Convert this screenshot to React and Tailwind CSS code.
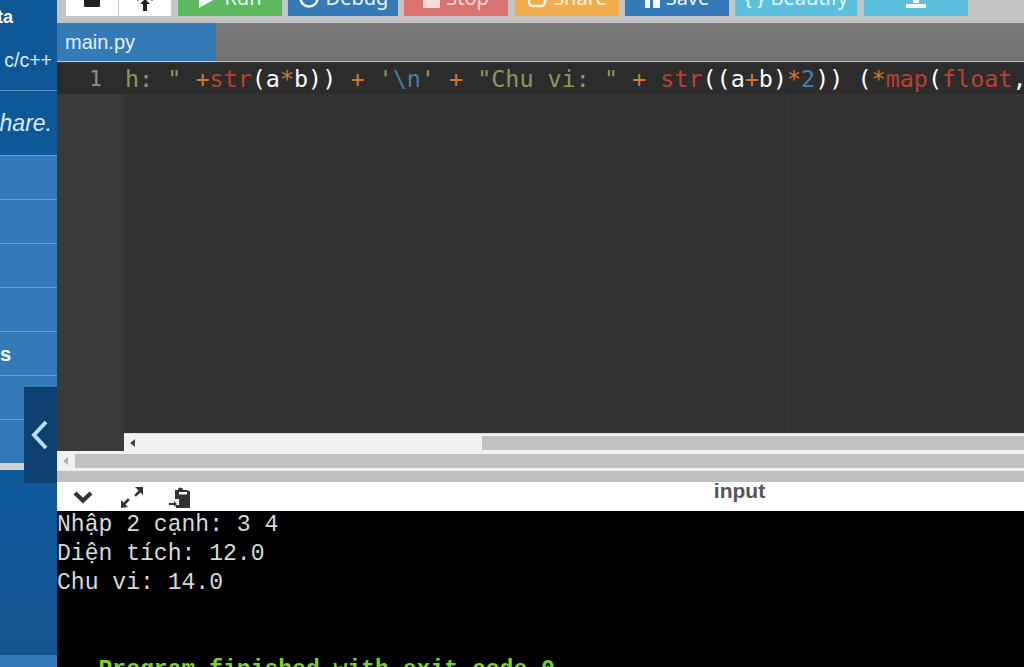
import React from "react";

const sans = "font-['Liberation_Sans',Arial,sans-serif]";

function ToolBtn({ cls, children, w }) {
  return (
    <div className={`${cls} ${w} h-[40px] shrink-0 flex items-end justify-center gap-[6px] pb-[8px] text-[20px] leading-[20px] text-[#eef5fb] whitespace-nowrap`}>
      {children}
    </div>
  );
}

function Toolbar() {
  return (
    <div className="h-[23px] bg-[#c4c4c4] flex items-end overflow-hidden pb-[7px] pl-[9px] shrink-0">
      <div className="flex shrink-0 mr-[7px] gap-px">
        <div className="w-[52px] h-[40px] bg-white flex items-end justify-center pb-[9px]">
          <div className="w-[16px] h-[16px] bg-[#222] rounded-[1px]" />
        </div>
        <div className="w-[52px] h-[40px] bg-white flex items-end justify-center pb-[5px]">
          <svg width="22" height="18" viewBox="0 0 22 18" fill="#222">
            <path d="M11 6l5 5h-3v7H9v-7H6zM2 6l3-3 2 2-3 3zM20 6l-3-3-2 2 3 3z" />
          </svg>
        </div>
      </div>
      <div className="flex gap-[6px]">
        <ToolBtn cls="bg-[#5cb85c]" w="w-[104px]">
          <svg width="20" height="22" viewBox="0 0 20 22" className="mb-[-1px]"><path d="M1 1l18 10L1 21z" fill="#eef5fb" /></svg>
          <span>Run</span>
        </ToolBtn>
        <ToolBtn cls="bg-[#337ab7]" w="w-[110px]">
          <svg width="22" height="22" viewBox="0 0 22 22" className="mb-[-1px]" fill="none" stroke="#eef5fb" strokeWidth="2.5"><circle cx="11" cy="11" r="8.5" /><path d="M11 6v5" /></svg>
          <span>Debug</span>
        </ToolBtn>
        <ToolBtn cls="bg-[#d9736f]" w="w-[104px]">
          <div className="w-[17px] h-[16px] bg-[#f6dcda]" />
          <span className="text-[#f6dcda]">Stop</span>
        </ToolBtn>
        <ToolBtn cls="bg-[#f0ad4e] ml-px" w="w-[104px]">
          <svg width="20" height="18" viewBox="0 0 20 18" fill="none" stroke="#fdf3e3" strokeWidth="2.5"><path d="M2 0v12a4 4 0 0 0 4 4h8a4 4 0 0 0 4-4V0" /></svg>
          <span className="text-[#fdf3e3]">Share</span>
        </ToolBtn>
        <ToolBtn cls="bg-[#337ab7]" w="w-[104px]">
          <div className="flex gap-[3px]">
            <div className="w-[5px] h-[14px] bg-white" />
            <div className="w-[7px] h-[14px] bg-white" />
          </div>
          <span>Save</span>
        </ToolBtn>
        <ToolBtn cls="bg-[#5bc0de]" w="w-[122px]">
          <span className="text-[#e4f5fa]">{"{ }"}</span>
          <span className="text-[#e4f5fa]">Beautify</span>
        </ToolBtn>
        <div className="w-[104px] h-[40px] bg-[#5bc0de] ml-px shrink-0 flex flex-col items-center justify-end pb-[8px]">
          <div className="w-[6px] h-[8px] bg-white" />
          <div className="w-[20px] h-[4px] bg-white mt-px" />
        </div>
      </div>
    </div>
  );
}

function Tabs() {
  return (
    <div className="h-[39px] flex shrink-0 bg-gradient-to-b from-[#7b7b7b] to-[#717171] border-b border-[#c8c8c8]">
      <div className={`${sans} w-[159px] bg-[#337ab7] text-[#e3f1fb] text-[20px] leading-[38px] pl-[8px]`}>main.py</div>
    </div>
  );
}

function Code() {
  const o = "text-[#cb7a32]";
  const g = "text-[#8a9a5b]";
  const r = "text-[#b9412f]";
  const b = "text-[#4d7da3]";
  const w = "text-white";
  return (
    <div className="h-[30px] bg-[#2c2c2c] whitespace-pre text-[23.4px] leading-[30px] font-['DejaVu_Sans_Mono',monospace] pl-px">
      <span className={g}>{'h: " '}</span>
      <span className={o}>+</span>
      <span className={r}>str</span>
      <span className={w}>(a</span>
      <span className={o}>*</span>
      <span className={w}>b)) </span>
      <span className={o}>+ </span>
      <span className={g}>'</span>
      <span className={b}>\n</span>
      <span className={g}>'</span>
      <span className={o}> + </span>
      <span className={g}>"Chu vi: "</span>
      <span className={o}> + </span>
      <span className={r}>str</span>
      <span className={w}>((a</span>
      <span className={o}>+</span>
      <span className={w}>b)</span>
      <span className={o}>*</span>
      <span className={b}>2</span>
      <span className={w}>)) (</span>
      <span className={o}>*</span>
      <span className={r}>map</span>
      <span className={w}>(</span>
      <span className={r}>float</span>
      <span className={w}>,</span>
    </div>
  );
}

function Editor() {
  return (
    <div className="h-[387px] flex shrink-0 bg-[#3a3a3a] overflow-hidden">
      <div className="w-[67px] shrink-0">
        <div className="h-[30px] bg-[#2c2c2c] text-right pr-[22px] text-[#8f8f8f] text-[21px] leading-[30px] font-['DejaVu_Sans_Mono',monospace]">1</div>
      </div>
      <div className="flex-1 min-w-0 flex flex-col">
        <Code />
        <div className="flex-1 flex bg-[#333333]">
          <div className="w-[664px] border-r border-[#3e3e3e]" />
        </div>
        <div className="h-[18px] flex bg-[#f1f1f1] border-t border-[#dcdcdc] shrink-0 items-center">
          <div className="w-[358px] pl-[6px]">
            <div className="w-0 h-0 border-y-[4px] border-y-transparent border-r-[5px] border-r-[#444]" />
          </div>
          <div className="flex-1 h-[14px] bg-[#c1c1c1]" />
        </div>
      </div>
    </div>
  );
}

function Scroll() {
  return (
    <div className="shrink-0">
      <div className="h-[19px] flex items-center bg-[#f1f1f1]">
        <div className="w-[18px] pl-[6px]">
          <div className="w-0 h-0 border-y-[4px] border-y-transparent border-r-[5px] border-r-[#b0b0b0]" />
        </div>
        <div className="flex-1 h-[14px] bg-[#c1c1c1]" />
      </div>
      <div className="h-[12px] bg-[#bfbfbf] border-t border-[#ececec]" />
    </div>
  );
}

function OutputBar() {
  return (
    <div className="h-[29px] bg-white flex items-center relative shrink-0">
      <svg width="20" height="14" viewBox="0 0 20 14" className="ml-[16px] mt-px" fill="none" stroke="#333" strokeWidth="4.2"><path d="M2 3l8 7.5L18 3" /></svg>
      <svg width="24" height="24" viewBox="0 0 24 24" className="ml-[27px]" fill="#333">
        <path d="M15 2h8v8l-2.6-2.6-4.4 4.4-1.8-1.8 4.4-4.4zM1 23v-8l2.6 2.6 4.4-4.4 1.8 1.8-4.4 4.4L8 22z" />
      </svg>
      <svg width="22" height="24" viewBox="0 0 22 24" className="ml-[25px] mt-[3px]" fill="#333">
        <path d="M6 4h3a2.5 2.5 0 0 1 5 0h3l4 1v17H7v-3h3v-6H6z" />
        <rect x="10" y="6" width="8" height="2.5" fill="#fff" />
        <path d="M0 17h5v-2l3 3-3 3v-2H0z" />
      </svg>
      <div className="flex-1 text-center mb-[12px]">
        <span className={`${sans} font-bold text-[21px] text-[#555] ml-[264px]`}>input</span>
      </div>
    </div>
  );
}

function Terminal() {
  return (
    <div className="flex-1 bg-black overflow-hidden whitespace-pre text-[23.05px] leading-[29px] text-[#d8d8d8] font-['Liberation_Mono','Courier_New',monospace]">
      <div>Nhập 2 cạnh: 3 4</div>
      <div>Diện tích: 12.0</div>
      <div>Chu vi: 14.0</div>
      <div className="h-[58px]" />
      <div className="font-bold text-[#7ed321] leading-[29px]">{"   Program finished with exit code 0"}</div>
    </div>
  );
}

function Sidebar() {
  const row = "h-[44px] border-b border-[#6a9fcc] flex items-center shrink-0";
  return (
    <div className={`${sans} w-[57px] shrink-0 h-full flex flex-col relative bg-[#0f5897] overflow-hidden`}>
      <div className="h-[34px] flex items-center justify-end pr-[44px] shrink-0 text-white font-bold text-[18px] whitespace-nowrap">ta</div>
      <div className="h-[57px] flex items-center justify-end pr-[5px] pb-[2px] border-b border-[#5d93c4] shrink-0 text-[#dcebf7] text-[19.5px] whitespace-nowrap">c/c++</div>
      <div className="h-[64px] flex items-center justify-end pr-[5px] shrink-0 text-[#dcebf7] italic text-[23px] whitespace-nowrap">hare.</div>
      <div className="flex flex-col bg-[#337ab7] border-t border-[#6a9fcc] h-[308px] shrink-0">
        <div className={row} />
        <div className={row} />
        <div className={row} />
        <div className={row} />
        <div className={`${row} text-white font-bold text-[20px]`}>s</div>
        <div className={row} />
        <div className="flex-1" />
      </div>
      <div className="h-[7px] bg-[#cfcfcf] shrink-0" />
      <div className="flex-1 bg-gradient-to-b from-[#0f5a9c] to-[#13558f]" />
      <div className="h-[12px] bg-[#337ab7] shrink-0" />
      <div className="absolute left-[24px] top-[387px] w-[33px] h-[96px] bg-[#0d3f70] flex items-center justify-center">
        <svg width="20" height="32" viewBox="0 0 20 32" className="mr-[3px]" fill="none" stroke="#b8defa" strokeWidth="4"><path d="M17 3L5 16l12 13" /></svg>
      </div>
    </div>
  );
}

export default function App() {
  return (
    <div className="w-[1024px] h-[667px] flex overflow-hidden bg-white">
      <Sidebar />
      <div className="flex-1 min-w-0 flex flex-col">
        <Toolbar />
        <Tabs />
        <div className="h-[2px] bg-[#333] shrink-0" />
        <Editor />
        <Scroll />
        <OutputBar />
        <Terminal />
      </div>
    </div>
  );
}
